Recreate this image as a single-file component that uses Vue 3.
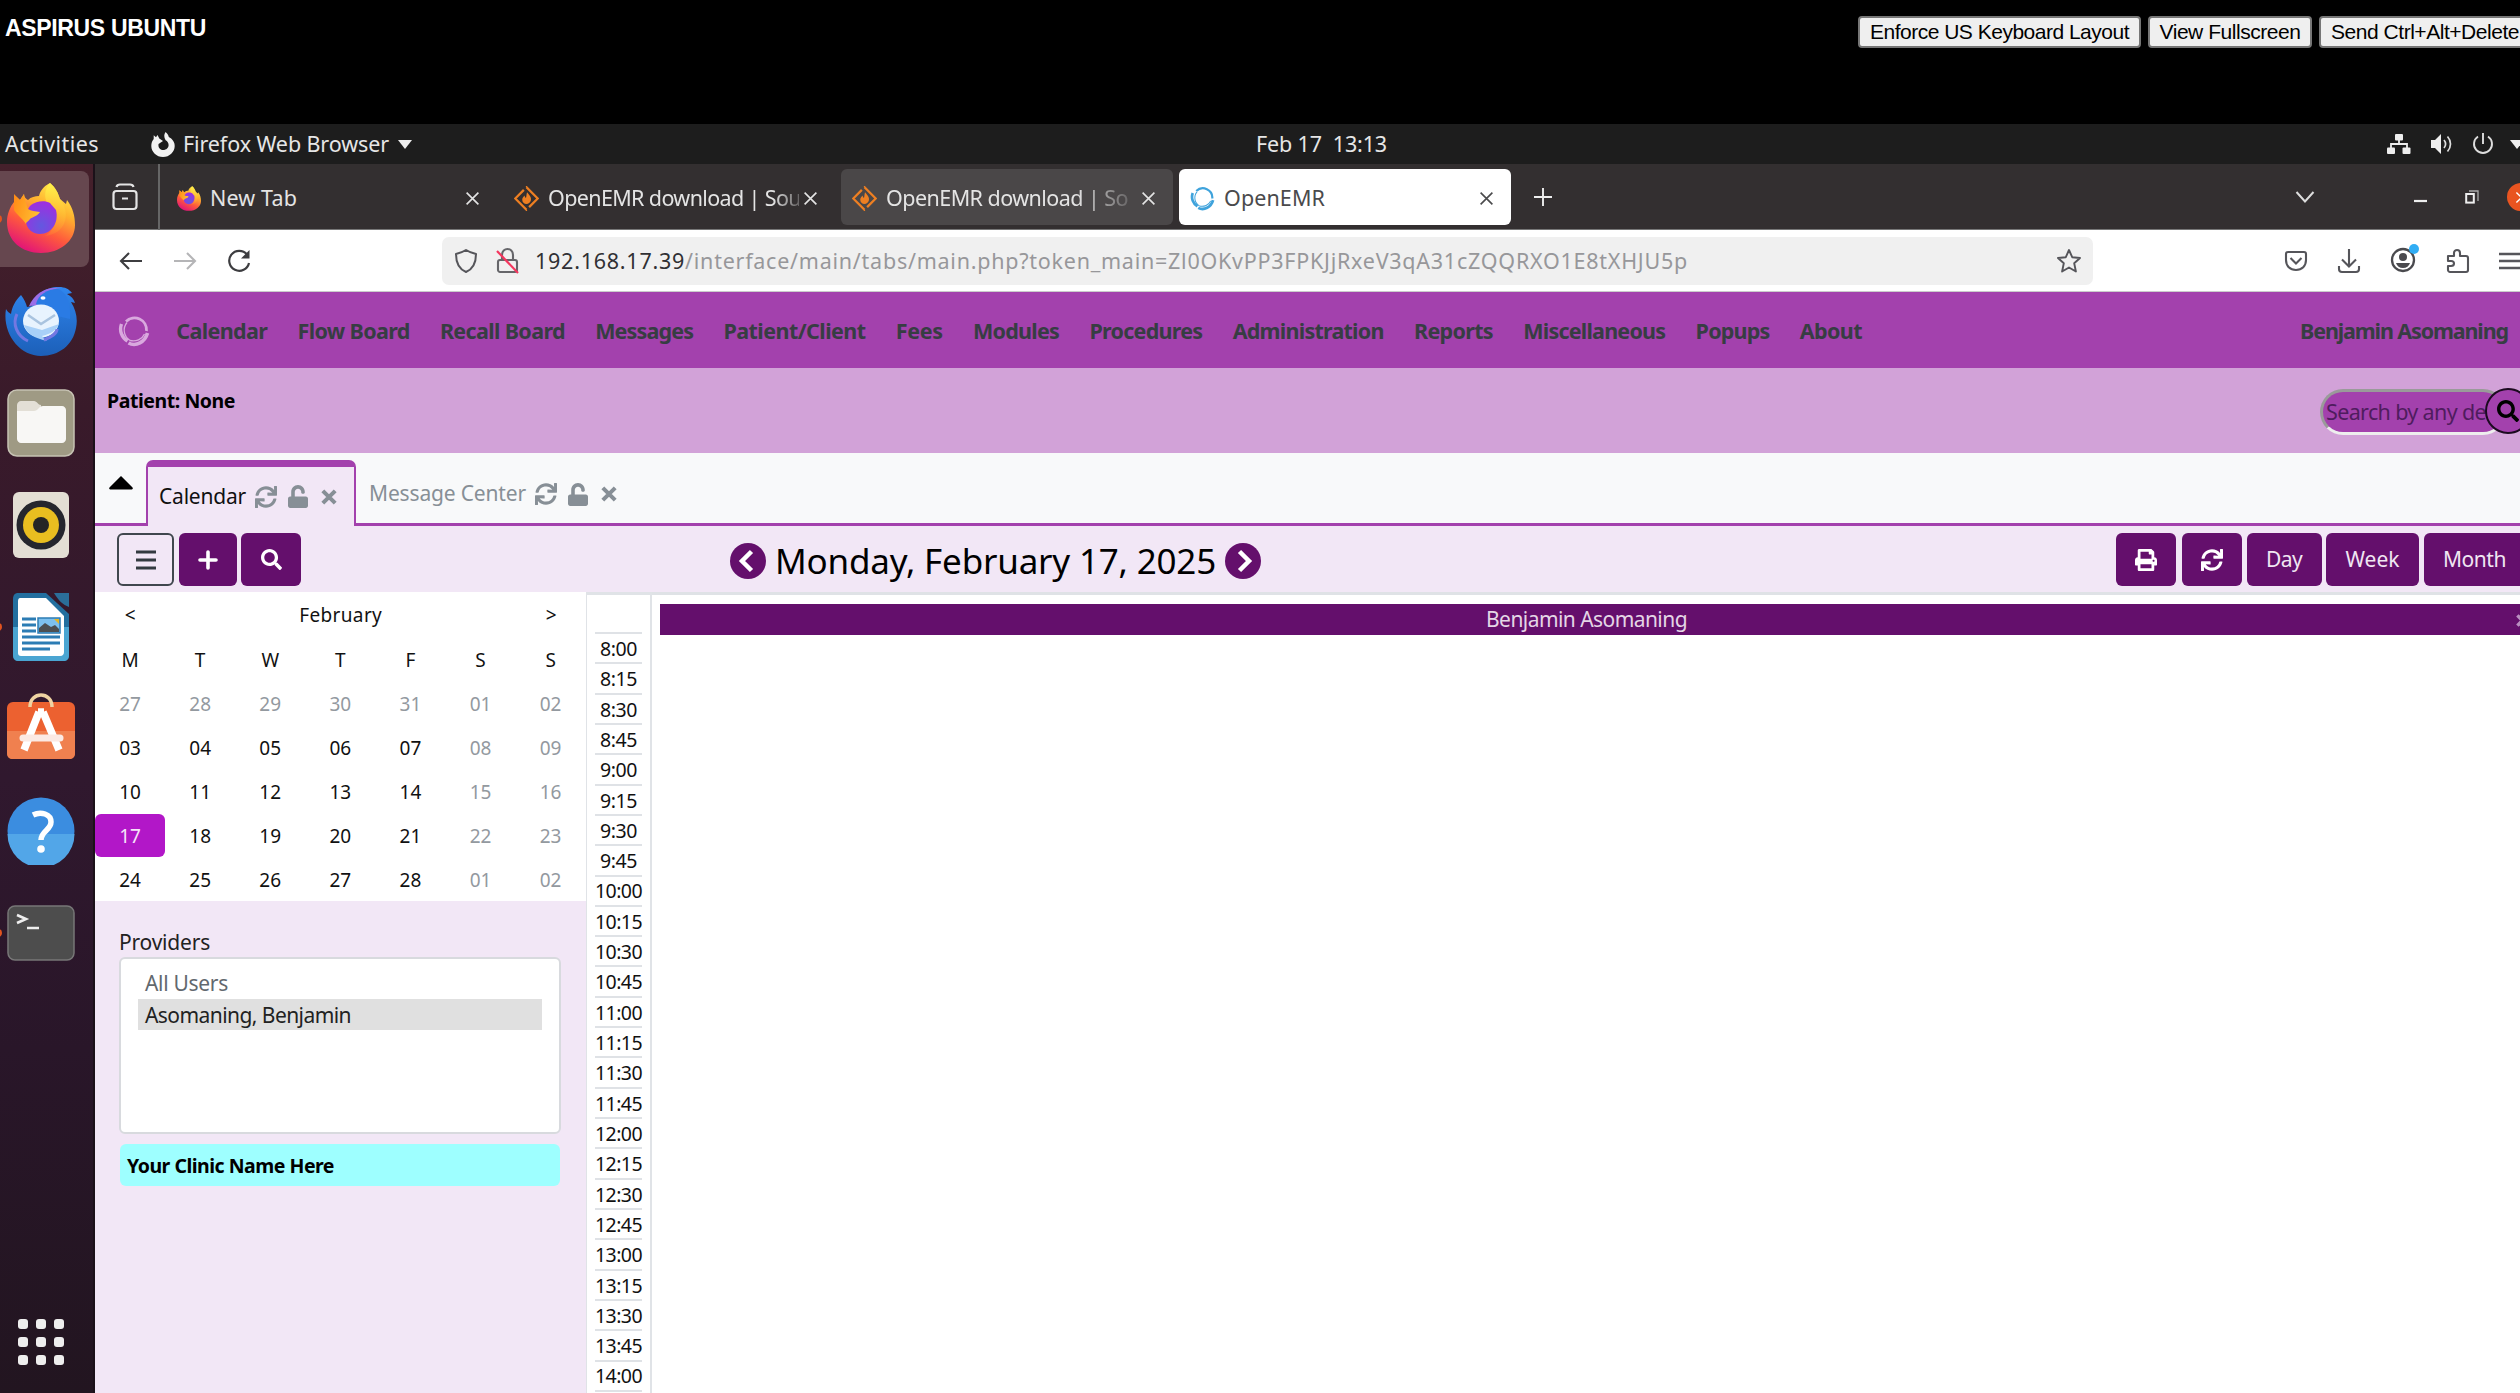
<script setup>
// Tracks a text run so that it fills the given width in pixels.
const vFit = {
  mounted(el, { value }) {
    const natural = el.getBoundingClientRect().width
    el.style.letterSpacing = (value - natural) / el.textContent.length + 'px'
  },
}

const menu = [
  ['Calendar', 91], ['Flow Board', 112], ['Recall Board', 125], ['Messages', 98],
  ['Patient/Client', 142], ['Fees', 47], ['Modules', 86], ['Procedures', 113],
  ['Administration', 151], ['Reports', 79], ['Miscellaneous', 142], ['Popups', 74], ['About', 62],
]

const weekdays = ['M', 'T', 'W', 'T', 'F', 'S', 'S']
const weeks = [
  [27, 28, 29, 30, 31, 1, 2],
  [3, 4, 5, 6, 7, 8, 9],
  [10, 11, 12, 13, 14, 15, 16],
  [17, 18, 19, 20, 21, 22, 23],
  [24, 25, 26, 27, 28, 1, 2],
]
const days = weeks.flatMap((week, w) =>
  week.map((n, d) => ({
    label: String(n).padStart(2, '0'),
    muted: w === 0 || d > 4,
    selected: w === 3 && d === 0,
  })),
)

const slots = Array.from({ length: 25 }, (_, i) => {
  const m = 8 * 60 + i * 15
  return Math.floor(m / 60) + ':' + String(m % 60).padStart(2, '0')
})

const syncPath = 'M440.65 12.57l4 82.77A247.16 247.16 0 0 0 255.83 8C134.73 8 33.91 94.92 12.29 209.82A12 12 0 0 0 24.09 224h49.05a12 12 0 0 0 11.67-9.26 175.91 175.91 0 0 1 317-56.94l-101.46-4.86a12 12 0 0 0-12.57 12v47.41a12 12 0 0 0 12 12H500a12 12 0 0 0 12-12V12a12 12 0 0 0-12-12h-47.37a12 12 0 0 0-11.98 12.57zM255.83 432a175.61 175.61 0 0 1-146-77.8l101.8 4.87a12 12 0 0 0 12.57-12v-47.4a12 12 0 0 0-12-12H12a12 12 0 0 0-12 12V500a12 12 0 0 0 12 12h47.35a12 12 0 0 0 12-12.6l-4.15-82.57A247.17 247.17 0 0 0 255.83 504c121.11 0 221.93-86.92 243.55-201.82a12 12 0 0 0-11.8-14.18h-49.05a12 12 0 0 0-11.67 9.26A175.86 175.86 0 0 1 255.83 432z'
const searchPath = 'M505 442.7L405.3 343c-4.5-4.5-10.6-7-17-7H372c27.6-35.3 44-79.7 44-128C416 93.1 322.9 0 208 0S0 93.1 0 208s93.1 208 208 208c48.3 0 92.7-16.4 128-44v16.3c0 6.4 2.5 12.5 7 17l99.7 99.7c9.4 9.4 24.6 9.4 33.9 0l28.3-28.3c9.4-9.4 9.4-24.6.1-34zM208 336c-70.7 0-128-57.2-128-128 0-70.7 57.2-128 128-128 70.7 0 128 57.2 128 128 0 70.7-57.2 128-128 128z'
const printPath = 'M448 192V77.25c0-8.49-3.37-16.62-9.37-22.63L393.37 9.37c-6-6-14.14-9.37-22.63-9.37H96C78.33 0 64 14.33 64 32v160c-35.35 0-64 28.65-64 64v112c0 8.84 7.16 16 16 16h48v96c0 17.67 14.33 32 32 32h320c17.67 0 32-14.33 32-32v-96h48c8.84 0 16-7.16 16-16V256c0-35.35-28.65-64-64-64zm-64 256H128v-96h256v96zm0-224H128V64h192v48c0 8.84 7.16 16 16 16h48v96zm48 72c-13.25 0-24-10.75-24-24 0-13.26 10.75-24 24-24s24 10.74 24 24c0 13.25-10.75 24-24 24z'
const unlockPath = 'M400 256H152V152.9c0-39.6 31.7-72.5 71.3-72.9 40-.4 72.7 32.1 72.7 72v16c0 13.3 10.7 24 24 24h32c13.3 0 24-10.7 24-24v-16C376 68 307.5-.3 223.5 0 139.5.3 72 69.5 72 153.5V256H48c-26.5 0-48 21.5-48 48v160c0 26.5 21.5 48 48 48h352c26.5 0 48-21.5 48-48V304c0-26.5-21.5-48-48-48z'
</script>

<template>
  <div class="screen">
    <svg class="defs" width="0" height="0">
      <defs>
        <linearGradient id="fxBody" x1="0.8" y1="0" x2="0.3" y2="1">
          <stop offset="0" stop-color="#fff44f" />
          <stop offset="0.35" stop-color="#ffb02e" />
          <stop offset="0.65" stop-color="#ff5a3c" />
          <stop offset="1" stop-color="#e0117b" />
        </linearGradient>
        <linearGradient id="fxTail" x1="0.5" y1="0" x2="0.5" y2="1">
          <stop offset="0" stop-color="#fff24a" />
          <stop offset="1" stop-color="#ffa52c" stop-opacity="0.2" />
        </linearGradient>
        <radialGradient id="fxGlobe" cx="0.5" cy="0.75" r="0.8">
          <stop offset="0" stop-color="#6358e0" />
          <stop offset="1" stop-color="#a32be0" />
        </radialGradient>
        <linearGradient id="fxHead" x1="0" y1="0" x2="1" y2="0.3">
          <stop offset="0" stop-color="#ff8a16" />
          <stop offset="1" stop-color="#ffbd30" />
        </linearGradient>
        <linearGradient id="tbBody" x1="0" y1="0" x2="0" y2="1">
          <stop offset="0" stop-color="#2f86ee" />
          <stop offset="1" stop-color="#1c5fb8" />
        </linearGradient>
        <symbol id="firefox" viewBox="0 0 68 70">
          <path fill="url(#fxBody)" d="M43 0c6 5 8 10 10 16l6 5 1-4c6 8 8 16 8 25C68 58 53 70 34 70S0 58 0 39c0-8 3-15 7-20V12l6 5 4-6c0 3 2 5 4 6 3-3 7-4 11-4 1-5 5-10 11-13z" />
          <path fill="url(#fxTail)" d="M43 0c6 5 8 10 10 16 5 6 7 14 5 22-3 10-12 14-20 15 8-5 11-12 9-20-2-7-7-10-8-16-2-6 0-13 4-17z" />
          <path fill="url(#fxGlobe)" d="M24 22c5-4 14-5 19-2l6 7c3 12-4 24-16 24-8 0-14-6-14-13 0-7 1-12 5-16z" />
          <path fill="url(#fxHead)" d="M7 19V11l6 6 4-6c0 5 2 9 4 15 3 2 7 2 12 3-2 4-8 5-10 7-2 3-4 3-4 5-4-6-10-10-12-14z" />
        </symbol>
        <symbol id="forge" viewBox="0 0 24 24">
          <path d="M12 1.2L22.8 12 12 22.8 1.2 12z" fill="none" stroke="#ee7f22" stroke-width="2.2" stroke-dasharray="27 3.5" />
          <path d="M12.5 6c3 3.500 4.500 5.500 3.600 8.200-.6 2-2.200 3-4.100 3-2.300 0-4.100-1.500-4.100-4 0-1.700 1-2.700 2.300-4 .2 1.300.5 1.900 1.300 2.300.6-1.800.4-3.700 1-5.500z" fill="#ee7f22" />
        </symbol>
        <symbol id="cross" viewBox="0 0 14 14">
          <path d="M1.500 1.500l11 11M12.500 1.500l-11 11" fill="none" stroke="currentColor" stroke-width="1.500" />
        </symbol>
        <symbol id="ring" viewBox="0 0 32 32">
          <g fill="none" stroke="currentColor">
            <path d="M8 6.500A12 12 0 0 1 28.500 16" stroke-width="2.800" />
            <path d="M3.500 9A14 14 0 0 0 9.500 26" stroke-width="3.400" />
            <path d="M9 7.500A12 12 0 0 0 12 25.500" stroke-width="1.300" />
            <path d="M10.500 28C18 32 27 27 29.500 18" stroke-width="3.600" />
            <path d="M12 25.500c6 1.500 12-1 14.500-6.500" stroke-width="1.300" />
          </g>
        </symbol>
        <symbol id="bold-cross" viewBox="0 0 16 16">
          <path d="M2.500 2.500l11 11M13.500 2.500l-11 11" fill="none" stroke="currentColor" stroke-width="3.600" />
        </symbol>
      </defs>
    </svg>

    <header class="console">
      <h1><span v-fit="201">ASPIRUS UBUNTU</span></h1>
      <div class="console-actions">
        <button class="b1"><span v-fit="259">Enforce US Keyboard Layout</span></button>
        <button class="b2"><span v-fit="141">View Fullscreen</span></button>
        <button class="b3"><span v-fit="188">Send Ctrl+Alt+Delete</span></button>
      </div>
    </header>

    <div class="topbar">
      <span v-fit="94" class="activities">Activities</span>
      <svg class="fx-mono" width="24" height="25" viewBox="0 0 24 25">
        <path fill="#f2f2f2" fill-rule="evenodd" d="M14.500 0c2 1.500 3 3.200 3.300 5l2.400 1.600c2.300 2.200 3.500 4.500 3.500 7.400C23.700 20 18.500 25 12 25S.3 20 .3 14c0-3 .9-5.300 2.400-7V3.200l2.300 2L6.500 3l1.800 3.500 3.700 2.500-4.500 3c-.5 3.500 1.500 6 4.600 6 3.300 0 5.500-2.200 5.500-5 0-2.200-1.200-3.800-3-4.800C12.900 5 12.800 2.500 14.500 0z" />
      </svg>
      <span v-fit="206" class="app-name">Firefox Web Browser</span>
      <span class="caret"></span>
      <span v-fit="131" class="clock">Feb 17&nbsp; 13:13</span>
      <div class="status">
        <svg width="24" height="22" viewBox="0 0 24 22"><path fill="none" stroke="#eee" stroke-width="1.800" d="M12 7v4M4 15v-4h16v4" /><rect x="8" y="1" width="8" height="6.500" fill="#eee" rx="1" /><rect x="0" y="14.500" width="8" height="6.500" fill="#eee" rx="1" /><rect x="15.500" y="14.500" width="8" height="6.500" fill="#eee" rx="1" /></svg>
        <svg width="24" height="22" viewBox="0 0 24 22"><path fill="#eee" d="M1 7h4l6-6v20l-6-6H1z" /><path fill="none" stroke="#ddd" stroke-width="1.700" d="M14 7c2 2.500 2 5.500 0 8M17.500 3.500c4 4.500 4 10.500 0 15" /></svg>
        <svg width="22" height="22" viewBox="0 0 22 22"><path fill="none" stroke="#ddd" stroke-width="1.900" d="M11 0v11M6 3.500a9 9 0 1 0 10 0" /></svg>
        <span class="caret"></span>
      </div>
    </div>

    <div class="desktop">
      <nav class="dock">
        <div class="slot running active"><svg width="68" height="70"><use href="#firefox" /></svg></div>
        <div class="slot">
          <svg width="72" height="69" viewBox="0 0 72 69">
            <path fill="url(#tbBody)" d="M1 22c1 2 3 4 5 5 1-7 4-13 10-19 3 4 5 8 6 12l5-1C29 8 40 0 54 0c6 0 10 2 13 6l-5 1c4 2 7 5 8 9l-4-1c5 8 7 17 5 26-3 17-17 28-35 28C14 69-3 46 1 22z" />
            <path fill="#9b6ee8" d="M24 19C29 7 41-1 56 1 44 2 39 8 36 18z" />
            <path fill="#2a7be4" d="M31 17C33 8 42 2 53 2c11 4 13 20 12 30L48 28z" />
            <ellipse cx="36" cy="34" rx="18" ry="16.500" fill="#e8f3fe" />
            <path fill="#a8d0f8" d="M19 38c4 11 12 13 23 16l-5-5c8-2 14-5 17-12l-17 6z" />
            <path fill="none" stroke="#a9c3df" stroke-width="2.500" d="M23 28l13 9 14-9" />
            <ellipse cx="38" cy="11" rx="2.500" ry="1.800" fill="#fff" />
            <path fill="none" stroke="#7378e2" stroke-width="3" d="M12 27c-5 10 0 22 11 27M52 42c0 5-6 8-13 11" />
          </svg>
        </div>
        <div class="slot">
          <svg width="68" height="68" viewBox="0 0 68 68"><rect x="1" y="1" width="66" height="66" rx="9" fill="#9f9a84" stroke="#c6c2b3" stroke-width="1.500" /><path fill="#e3dfd6" d="M10 16c0-2 2-4 4-4h13c3 0 4 4 7 4v8H10z" /><path fill="#f8f7f5" d="M10 22h17c4 0 5-5 9-5h19c2 0 4 2 4 4v29c0 2-2 4-4 4H14c-2 0-4-2-4-4z" /></svg>
        </div>
        <div class="slot">
          <svg width="58" height="68" viewBox="0 0 58 68"><rect x="1" y="1" width="56" height="66" rx="6" fill="#e3ded4" /><circle cx="29" cy="34" r="24.500" fill="#25262e" /><circle cx="29" cy="34" r="18" fill="#e9be20" /><circle cx="29" cy="34" r="8" fill="#252525" /></svg>
        </div>
        <div class="slot running">
          <svg width="58" height="68" viewBox="0 0 58 68"><path fill="#236f9f" d="M6 0h28l23 21v41c0 4-2 6-6 6H7c-4 0-6-2-6-6V6c0-4 2-6 5-6z" /><path fill="#4aa5d2" d="M1 34h56v28c0 4-2 6-6 6H7c-4 0-6-2-6-6z" /><path fill="#2b6e99" d="M42 0h15v14c-6-2-11-7-15-14z" /><path fill="#fff" d="M8 5h26l18 18v36c0 2-1 4-4 4H9c-2 0-3-1-3-3V8c0-2 1-3 2-3z" /><g stroke="#2c7cb4" stroke-width="3"><path d="M10 26h14M10 32h14M10 38h14M10 44h38M10 50h38M10 56h28" /></g><rect x="26" y="25" width="22" height="15" fill="#7dc0ee" stroke="#2c7cb4" stroke-width="1.500" /><path fill="#4c4f52" d="M27 39v-4l6-5 6 4 4-2 4 4v3z" /><path fill="#e6b625" d="M42 26h5v5z" /></svg>
        </div>
        <div class="slot store">
          <svg width="68" height="68" viewBox="0 0 68 68"><rect y="10" width="68" height="57" rx="6" fill="#ec6130" /><path fill="#f0804f" d="M0 39h68v22c0 4-2 6-6 6H6c-4 0-6-2-6-6z" /><path fill="none" stroke="#efd3a2" stroke-width="3.500" d="M23 15c0-16 22-16 22 0" /><path fill="none" stroke="#fff" stroke-width="7.500" d="M31 20h6M17 58L32 20M52 58L36 20" /><path stroke="#fbeae4" stroke-width="7" stroke-linecap="round" d="M16 46h37" /></svg>
        </div>
        <div class="slot">
          <svg width="68" height="68" viewBox="0 0 68 68"><circle cx="34" cy="34" r="33.500" fill="#3b8de0" /><path fill="#52a6e8" d="M.5 37h67a33.500 33.500 0 0 1-67 0z" /><path fill="none" stroke="#fff" stroke-width="5.500" d="M26 18c8-4 18-1 18 7 0 8-10 9-10 18" /><circle cx="34" cy="52" r="3.800" fill="#fff" /></svg>
        </div>
        <div class="slot running">
          <svg width="68" height="56" viewBox="0 0 68 56"><rect x="1" y="1" width="66" height="54" rx="7" fill="#4d4d4d" stroke="#777" stroke-width="1.500" /><path fill="none" stroke="#eee" stroke-width="2.600" d="M10 10l9 4-9 4M20 23h12" /></svg>
        </div>
        <div class="apps"><i v-for="n in 9" :key="n"></i></div>
      </nav>

      <main class="window">
        <div class="tabstrip">
          <svg class="recent" width="26" height="28" viewBox="0 0 26 28"><path fill="none" stroke="#e4e4e4" stroke-width="2.200" d="M4.500 4C5 2 6 1.500 8 1.500h10c2 0 3 .5 3.500 2.500M4.500 8h17c2 0 3 1 3 3v12c0 2-1 3-3 3h-17c-2 0-3-1-3-3V11c0-2 1-3 3-3zM10 15.500h6" /></svg>
          <div class="tab t1">
            <svg width="24" height="25"><use href="#firefox" /></svg>
            <span class="tab-label"><span v-fit="87">New Tab</span></span>
            <svg width="15" height="15"><use href="#cross" /></svg>
          </div>
          <div class="tab t2">
            <svg width="25" height="25"><use href="#forge" /></svg>
            <span class="tab-label fade"><span v-fit="253">OpenEMR download | Sou</span></span>
            <svg width="15" height="15"><use href="#cross" /></svg>
          </div>
          <div class="tab t2 hovered">
            <svg width="25" height="25"><use href="#forge" /></svg>
            <span class="tab-label fade more"><span v-fit="242">OpenEMR download | So</span></span>
            <svg width="15" height="15"><use href="#cross" /></svg>
          </div>
          <div class="tab t2 current">
            <svg class="favicon" width="25" height="25"><use href="#ring" /></svg>
            <span class="tab-label"><span v-fit="101">OpenEMR</span></span>
            <svg width="15" height="15"><use href="#cross" /></svg>
          </div>
          <svg class="plus" width="20" height="20" viewBox="0 0 20 20"><path stroke="#eee" stroke-width="1.900" d="M10 1v18M1 10h18" /></svg>
          <div class="window-buttons">
            <svg width="20" height="14" viewBox="0 0 20 14"><path fill="none" stroke="#ddd" stroke-width="2" d="M1.500 2L10 11.500 18.500 2" /></svg>
            <svg class="min" width="13" height="20" viewBox="0 0 13 20"><path stroke="#eee" stroke-width="2.200" d="M0 14h13" /></svg>
            <svg class="max" width="14" height="14" viewBox="0 0 14 14"><path fill="none" stroke="#aaa" stroke-width="1.300" d="M4 1h9v10" /><rect x="1.200" y="4" width="7.600" height="8.600" fill="none" stroke="#eee" stroke-width="2" /></svg>
            <span class="close"><svg width="13" height="13"><use href="#cross" /></svg></span>
          </div>
        </div>

        <div class="toolbar">
          <svg class="back" width="24" height="20" viewBox="0 0 24 20"><path fill="none" stroke="#3d3d40" stroke-width="2.100" d="M23 10H2M10 2l-8 8 8 8" /></svg>
          <svg class="forward" width="24" height="20" viewBox="0 0 24 20"><path fill="none" stroke="#b5b5b7" stroke-width="2.100" d="M1 10h21M14 2l8 8-8 8" /></svg>
          <svg class="reload" width="24" height="24" viewBox="0 0 24 24"><path fill="none" stroke="#3d3d40" stroke-width="2.200" d="M20 5.500A10 10 0 1 0 22 14" /><path fill="#3d3d40" d="M22.500 1v8.500H14z" /></svg>
          <div class="urlbar">
            <svg width="24" height="26" viewBox="0 0 24 26"><path fill="none" stroke="#55555a" stroke-width="2" stroke-linejoin="round" d="M12 2c3 2 6 3 10 4 0 9-3 15-10 18C5 21 2 15 2 6c4-1 7-2 10-4z" /></svg>
            <svg class="insecure" width="24" height="28" viewBox="0 0 24 28"><path fill="none" stroke="#66666a" stroke-width="2.100" d="M6 13V8c0-8 11-8 11 0v5M4 13h15c1 0 2 1 2 2v8c0 1-1 2-2 2H4c-1 0-2-1-2-2v-8c0-1 1-2 2-2z" /><path stroke="#f4365e" stroke-width="2.200" d="M1 4l21 22" /></svg>
            <span v-fit="1153" class="url"><b>192.168.17.39</b>/interface/main/tabs/main.php?token_main=Zl0OKvPP3FPKJjRxeV3qA31cZQQRXO1E8tXHJU5p</span>
            <svg class="star" width="26" height="26" viewBox="0 0 26 26"><path fill="none" stroke="#55555a" stroke-width="1.900" stroke-linejoin="round" d="M13 2l3.200 7.200 7.800.8-5.800 5.300 1.700 8.200-6.900-4-6.900 4 1.700-8.200L2 10l7.800-.8z" /></svg>
          </div>
          <div class="tools">
            <svg width="24" height="24" viewBox="0 0 24 24"><path fill="none" stroke="#55555a" stroke-width="2.100" d="M4 3h16c1.500 0 2 .5 2 2v6c0 6-4 10-10 10S2 17 2 11V5c0-1.500.5-2 2-2zM6.500 9l5.500 5.500L17.500 9" /></svg>
            <svg width="24" height="26" viewBox="0 0 24 26"><path fill="none" stroke="#55555a" stroke-width="2.100" d="M12 1v17M5 11.500l7 7 7-7M2 18v3c0 2 1 3 3 3h14c2 0 3-1 3-3v-3" /></svg>
            <svg width="29" height="30" viewBox="0 0 29 30"><circle cx="13" cy="17" r="11" fill="none" stroke="#4a4a4e" stroke-width="2.300" /><circle cx="13" cy="14" r="4" fill="#4a4a4e" /><path fill="#4a4a4e" d="M6 20h14c-1 3-3.500 5-7 5s-6-2-7-5z" /><circle cx="24" cy="6" r="5" fill="#31adf4" /></svg>
            <svg width="24" height="26" viewBox="0 0 24 26"><path fill="none" stroke="#55555a" stroke-width="2.100" stroke-linejoin="round" d="M2 8h6V5c0-4 6-4 6 0v3h6c1 0 2 1 2 2v12c0 1-1 2-2 2H4c-1 0-2-1-2-2v-4h3c4 0 4-5 0-5H2z" /></svg>
            <svg width="24" height="20" viewBox="0 0 24 20"><path stroke="#55555a" stroke-width="2.300" d="M0 3h24M0 10h24M0 17h24" /></svg>
          </div>
        </div>

        <div class="emr-nav">
          <svg class="logo" width="32" height="32"><use href="#ring" /></svg>
          <a v-for="[label, width] in menu" :key="label" v-fit="width">{{ label }}</a>
          <a v-fit="208" class="user">Benjamin Asomaning</a>
        </div>

        <div class="patient">
          <b v-fit="128">Patient: None</b>
          <div class="search">
            <div class="search-input"><span v-fit="160">Search by any de</span></div>
            <span class="search-go"><svg width="22" height="22" viewBox="0 0 512 512"><path :d="searchPath" /></svg></span>
          </div>
        </div>

        <div class="emr-tabs">
          <svg class="collapse" width="30" height="17" viewBox="0 0 30 17"><path d="M15 0l14 14c1 1 0 2.500-1 2.500H2C1 16.500 0 15 1 14z" /></svg>
          <div class="emr-tab selected">
            <span v-fit="87">Calendar</span>
            <svg width="22" height="22" viewBox="0 0 512 512"><path :d="syncPath" /></svg>
            <svg width="20" height="23" viewBox="0 0 448 512"><path :d="unlockPath" /></svg>
            <svg width="18" height="18"><use href="#bold-cross" /></svg>
          </div>
          <div class="emr-tab">
            <span v-fit="157">Message Center</span>
            <svg width="22" height="22" viewBox="0 0 512 512"><path :d="syncPath" /></svg>
            <svg width="20" height="23" viewBox="0 0 448 512"><path :d="unlockPath" /></svg>
            <svg width="18" height="18"><use href="#bold-cross" /></svg>
          </div>
          <div class="rest"></div>
        </div>

        <div class="cal-bar">
          <div class="left-tools">
            <button class="btn outline"><svg width="20" height="22" viewBox="0 0 20 22"><path stroke="#333a40" stroke-width="3" d="M0 3h20M0 11h20M0 19h20" /></svg></button>
            <button class="btn w58"><svg width="20" height="20" viewBox="0 0 20 20"><path stroke="#fff" stroke-width="3.600" stroke-linecap="round" d="M10 2v16M2 10h16" /></svg></button>
            <button class="btn w60"><svg width="21" height="21" viewBox="0 0 512 512"><path fill="#fff" :d="searchPath" /></svg></button>
          </div>
          <div class="date">
            <svg width="36" height="36" viewBox="0 0 36 36"><circle cx="18" cy="18" r="18" fill="#640f6c" /><path fill="none" stroke="#fff" stroke-width="4.500" d="M21.500 8.500L12 18l9.500 9.500" /></svg>
            <span v-fit="441">Monday, February 17, 2025</span>
            <svg width="36" height="36" viewBox="0 0 36 36"><circle cx="18" cy="18" r="18" fill="#640f6c" /><path fill="none" stroke="#fff" stroke-width="4.500" d="M14.500 8.500L24 18l-9.500 9.500" /></svg>
          </div>
          <div class="right-tools">
            <button class="btn w60"><svg width="22" height="22" viewBox="0 0 512 512"><path fill="#fff" :d="printPath" /></svg></button>
            <button class="btn w60 gap"><svg width="22" height="22" viewBox="0 0 512 512"><path fill="#fff" :d="syncPath" /></svg></button>
            <button class="btn w75"><span v-fit="36">Day</span></button>
            <button class="btn w93"><span v-fit="54">Week</span></button>
            <button class="btn w102"><span v-fit="63">Month</span></button>
          </div>
        </div>

        <div class="content">
          <aside>
            <div class="picker">
              <div class="month"><span>&lt;</span><span v-fit="83" class="name">February</span><span>&gt;</span></div>
              <div class="grid">
                <span v-for="(d, i) in weekdays" :key="'h' + i">{{ d }}</span>
                <span v-for="(d, i) in days" :key="i" :class="{ muted: d.muted, chosen: d.selected }">{{ d.label }}</span>
              </div>
            </div>
            <div class="providers">
              <label><span v-fit="91">Providers</span></label>
              <div class="listbox">
                <div class="option"><span v-fit="83">All Users</span></div>
                <div class="option picked"><span v-fit="206">Asomaning, Benjamin</span></div>
              </div>
              <div class="clinic"><span v-fit="207">Your Clinic Name Here</span></div>
            </div>
          </aside>
          <div class="times">
            <div class="times-head"></div>
            <div v-for="t in slots" :key="t" class="time"><span v-fit="t.length > 4 ? 47 : 37">{{ t }}</span></div>
          </div>
          <section class="schedule">
            <div class="provider-head">
              <span v-fit="201">Benjamin Asomaning</span>
              <svg width="15" height="15"><use href="#bold-cross" /></svg>
            </div>
          </section>
        </div>
      </main>
    </div>
  </div>
</template>

<style>
html,
body {
  margin: 0;
  overflow: hidden;
}
</style>

<style scoped>
.screen {
  width: 2520px;
  height: 1393px;
  overflow: hidden;
  background: #000;
  display: flex;
  flex-direction: column;
  font-family: "Noto Sans", "Open Sans", sans-serif;
  font-size: 20px;
  line-height: 1.3;
}
.screen * { box-sizing: border-box; }
.defs { position: absolute; }
svg { flex: none; display: block; }
span, a, b { white-space: pre; }
button { margin: 0; padding: 0; font: inherit; flex: none; }

.console {
  height: 124px;
  flex: none;
  display: flex;
  justify-content: space-between;
  align-items: flex-start;
  font-family: "Liberation Sans", Arial, sans-serif;
}
.console h1 { margin: 14px 0 0 5px; font-size: 23px; line-height: 28px; color: #fff; }
.console h1 span { display: inline-block; }
.console-actions { display: flex; gap: 7px; margin-top: 16px; width: 662px; }
.console-actions button {
  display: flex;
  justify-content: center;
  align-items: center;
  height: 32px;
  font-size: 21px;
  line-height: 28px;
  color: #000;
  background: #efefef;
  border: 2px solid #767676;
  border-radius: 4px;
}
.b1 { width: 283px; }
.b2 { width: 164px; }
.b3 { width: 212px; }

.topbar {
  height: 40px;
  flex: none;
  display: flex;
  align-items: center;
  background: #1d1d1d;
  color: #e6e6e6;
  font-size: 21.500px;
}
.activities { margin-left: 5px; }
.fx-mono { margin-left: 52px; }
.app-name { margin-left: 8px; }
.caret { border: 7.500px solid transparent; border-top: 9px solid #eee; border-bottom: 0; margin-left: 9px; }
.clock { margin-left: 844px; }
.status { display: flex; align-items: center; margin-left: auto; width: 133px; flex: none; }
.status svg:nth-child(2) { margin-left: 19px; }
.status svg:nth-child(3) { margin-left: 18px; }
.status .caret { margin-left: 16px; }

.desktop { flex: 1; min-height: 0; display: flex; }
.dock {
  width: 95px;
  flex: none;
  display: flex;
  flex-direction: column;
  padding-top: 4px;
  background: linear-gradient(#45202b, #391a2a 20%, #30182e 50%, #291629 72%, #221520);
  border-right: 2px solid #1b1119;
}
.slot {
  height: 102px;
  width: 82px;
  flex: none;
  display: flex;
  align-items: center;
  justify-content: center;
  position: relative;
}
.slot.active::before {
  content: "";
  position: absolute;
  inset: 3px -7px 3px 0;
  background: #66474f;
  border-radius: 0 8px 8px 0;
}
.slot svg { position: relative; }
.slot.active svg { margin-top: -2px; }
.slot.store svg { margin-top: -6px; }
.running::after {
  content: "";
  position: absolute;
  left: -6px;
  top: 47px;
  width: 8px;
  height: 8px;
  border-radius: 50%;
  background: #e2531f;
}
.apps { margin: auto 0 28px 18px; display: grid; grid-template-columns: repeat(3, 10px); gap: 8px; }
.apps i { height: 10px; border-radius: 3px; background: #eee; }

.window { flex: 1; min-width: 0; display: flex; flex-direction: column; background: #fff; overflow: hidden; }

.tabstrip {
  height: 66px;
  flex: none;
  display: flex;
  align-items: center;
  padding-top: 1px;
  background: #332f30;
  border-bottom: 1px solid #777;
  color: #e4e4e4;
  font-size: 21.500px;
}
.recent { margin: 0 20px 0 17px; }
.tab { display: flex; align-items: center; flex: none; height: 56px; border-radius: 6px; padding: 2px 17px 0 11px; }
.tab-label { flex: 1; min-width: 0; margin: 0 4px 0 9px; display: flex; }
.t1 { width: 345px; height: 66px; border-radius: 0; border-left: 2px solid #666; padding-left: 17px; padding-right: 23px; }
.t2 { width: 332px; margin-right: 6px; }
.t2.current { margin-right: 0; }
.fade { mask-image: linear-gradient(90deg, #000 225px, transparent 262px); }
.more { mask-image: linear-gradient(90deg, #000 190px, transparent 256px); }
.hovered { background: #4a4748; }
.current { background: #fff; color: #4a4a4c; }
.favicon { color: #3fa3dc; }
.plus { margin-left: 22px; }
.window-buttons { display: flex; align-items: center; margin-left: auto; width: 225px; flex: none; }
.min { margin-left: 99px; }
.max { margin-left: 38px; }
.close { margin-left: 28px; width: 28px; height: 28px; flex: none; border-radius: 50%; background: #e95420; color: #fff; display: flex; align-items: center; justify-content: center; }

.toolbar { height: 62px; flex: none; display: flex; align-items: center; border-bottom: 1px solid #ccc; }
.back { margin-left: 24px; }
.forward { margin-left: 30px; }
.reload { margin-left: 30px; }
.urlbar {
  width: 1651px;
  height: 48px;
  flex: none;
  margin-left: 191px;
  padding: 0 11px 0 12px;
  display: flex;
  align-items: center;
  border-radius: 7px;
  background: #f0f0f0;
  color: #97979a;
  font-size: 21.500px;
}
.insecure { margin-left: 18px; }
.url { margin-left: 15px; }
.url b { font-weight: 400; color: #303034; }
.star { margin-left: auto; }
.tools { margin-left: 191px; display: flex; align-items: center; gap: 29px; }
.tools svg:nth-child(3) { margin: -6px -2px 0 0; }

.emr-nav {
  height: 76px;
  flex: none;
  display: flex;
  align-items: center;
  gap: 30.300px;
  padding: 1px 12px 0 23px;
  background: #a341ad;
  color: #373d43;
  font-size: 21.500px;
  font-weight: 700;
}
.emr-nav a { flex: none; }
.logo { color: #d9a9de; margin-right: -4px; }
.user { margin-left: auto; }

.patient {
  height: 85px;
  flex: none;
  display: flex;
  align-items: flex-start;
  justify-content: space-between;
  padding-left: 12px;
  background: #d2a2d8;
  font-size: 19.500px;
}
.patient b { margin-top: 20px; }
.search { width: 200px; flex: none; display: flex; align-items: center; margin-top: 21px; }
.search-input {
  width: 186px;
  height: 46px;
  flex: none;
  display: flex;
  align-items: center;
  padding-left: 3px;
  overflow: hidden;
  border: 3px solid;
  border-color: #9a9a9a #eee #eee #9a9a9a;
  border-radius: 23px;
  background: #a341ad;
  color: #4f1c5e;
  font-size: 21.500px;
}
.search-go {
  width: 46px;
  height: 46px;
  flex: none;
  margin-left: -21px;
  margin-top: -2px;
  position: relative;
  display: flex;
  align-items: center;
  justify-content: center;
  border: 2px solid #1c0a20;
  border-radius: 50%;
  background: #a341ad;
}

.emr-tabs { height: 73px; flex: none; display: flex; align-items: stretch; background: #f8f9fa; }
.collapse { width: 51px; padding: 23px 10px 33px 11px; height: 73px; border-bottom: 3px solid #a341ad; box-sizing: border-box; }
.emr-tab {
  display: flex;
  align-items: center;
  gap: 9px;
  padding-left: 13px;
  padding-top: 12px;
  border-bottom: 3px solid #a341ad;
  color: #878f96;
  fill: #878f96;
  font-size: 21px;
}
.emr-tab svg:nth-of-type(2) { margin-left: 2px; }
.emr-tab svg:nth-of-type(3) { margin-left: 3px; }
.emr-tab.selected {
  width: 210px;
  margin-top: 7px;
  padding-top: 0;
  padding-left: 11px;
  border: 2px solid #a341ad;
  border-top-width: 7px;
  border-bottom: 0;
  border-radius: 7px 7px 0 0;
  background: #f2e7f6;
}
.emr-tab.selected span { color: #101010; }
.rest { flex: 1; border-bottom: 3px solid #a341ad; }

.cal-bar { height: 66px; flex: none; display: flex; align-items: flex-start; background: #f2e7f6; }
.left-tools { display: flex; gap: 4.500px; margin: 7px 0 0 22px; }
.btn {
  height: 53px;
  border: 0;
  border-radius: 6px;
  background: #640f6c;
  color: #f0e6f2;
  display: flex;
  align-items: center;
  justify-content: center;
  font-size: 21px;
}
.btn.outline { width: 57px; background: transparent; border: 2px solid #40474e; }
.w58 { width: 58px; }
.w60 { width: 60px; }
.w75 { width: 75px; }
.w93 { width: 93px; }
.w102 { width: 102px; }
.date { display: flex; align-items: center; gap: 9px; height: 69px; margin-left: 429px; font-size: 35px; }
.right-tools { display: flex; gap: 4.500px; margin: 7px 0 0 auto; width: 404px; flex: none; }
.gap { margin-left: 1.500px; }

.content { flex: 1; min-height: 0; display: flex; }
aside { width: 491px; flex: none; background: #f2e7f6; }
.picker { height: 309px; background: #fff; font-size: 19px; color: #111; }
.month { width: 491.400px; height: 46px; display: flex; align-items: center; }
.month span { width: 70.200px; text-align: center; flex: none; }
.month .name { width: auto; margin: 0 auto; }
.grid { display: grid; grid-template-columns: repeat(7, 70.100px); grid-auto-rows: 43.900px; }
.grid span { display: flex; align-items: center; justify-content: center; padding-top: 1px; }
.grid .muted { color: #93999f; }
.grid .chosen { background: #b217c8; color: #f5e3f8; border-radius: 6px; }
.providers { padding: 27px 25px 0 24px; }
.providers label { display: block; height: 29px; line-height: 28px; font-size: 21px; color: #222; }
.providers span { display: inline-block; }
.listbox { height: 177px; padding: 8px 17px; border: 2px solid #d8dade; border-radius: 6px; background: #fff; font-size: 21px; }
.option { height: 31.500px; line-height: 32px; padding-left: 7px; color: #62686e; }
.option.picked { background: #e0e0e0; color: #222; }
.clinic { height: 42px; margin: 10px 1px 0; padding-left: 7px; border-radius: 6px; background: #9effff; font-size: 19.500px; line-height: 43px; font-weight: 700; }

.times { width: 66px; flex: none; border: 2px solid #e0e3e7; border-width: 3px 2px 0 1px; background: #fff; }
.times-head { height: 39px; margin: 0 8px; border-bottom: 2px solid #dfe2e6; }
.time {
  height: 30.320px;
  margin: 0 8px;
  display: flex;
  align-items: center;
  justify-content: center;
  padding-top: 1px;
  border-bottom: 2px solid #dfe2e6;
  font-size: 19.500px;
  color: #111;
}
.schedule { flex: 1; border-top: 3px solid #dfe2e6; padding: 9px 0 0 8px; }
.provider-head {
  height: 31px;
  display: flex;
  align-items: center;
  position: relative;
  padding-left: 826px;
  overflow: hidden;
  background: #640f6c;
  color: #e4d6e6;
  font-size: 21px;
}
.provider-head svg { position: absolute; right: -10px; top: 9px; color: #b98fc0; }
</style>
